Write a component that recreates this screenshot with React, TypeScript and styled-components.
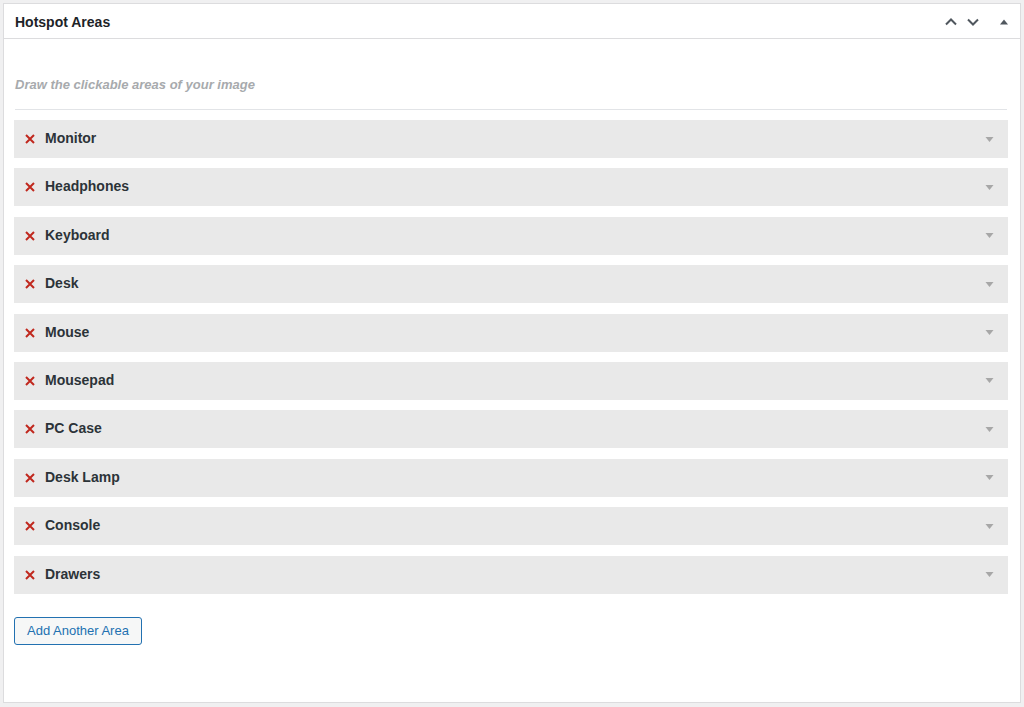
import React from "react";
import styled, { createGlobalStyle } from "styled-components";

const areas: string[] = [
  "Monitor",
  "Headphones",
  "Keyboard",
  "Desk",
  "Mouse",
  "Mousepad",
  "PC Case",
  "Desk Lamp",
  "Console",
  "Drawers",
];

export default function App() {
  return (
    <>
      <GlobalStyle />
      <Page>
        <Panel>
          <Header>
            <Title>Hotspot Areas</Title>
            <HeaderActions>
              <IconButton aria-label="Move up">
                <svg width="14" height="14" viewBox="0 0 14 14">
                  <path d="M2 9.5 L7 4.5 L12 9.5" fill="none" stroke="#50575e" strokeWidth="2" />
                </svg>
              </IconButton>
              <IconButton aria-label="Move down">
                <svg width="14" height="14" viewBox="0 0 14 14">
                  <path d="M2 4.5 L7 9.5 L12 4.5" fill="none" stroke="#50575e" strokeWidth="2" />
                </svg>
              </IconButton>
              <IconButton aria-label="Toggle panel">
                <svg width="10" height="10" viewBox="0 0 10 10">
                  <path d="M1 7.5 L5 2.5 L9 7.5 Z" fill="#50575e" />
                </svg>
              </IconButton>
            </HeaderActions>
          </Header>
          <Body>
            <Hint>Draw the clickable areas of your image</Hint>
            <Divider />
            <List>
              {areas.map((name) => (
                <Row key={name}>
                  <Remove aria-label={"Remove " + name}>
                    <svg width="10" height="10" viewBox="0 0 10 10">
                      <path d="M1 1 L9 9 M9 1 L1 9" stroke="#c0281e" strokeWidth="2" />
                    </svg>
                  </Remove>
                  <Label>{name}</Label>
                  <Caret>
                    <svg width="9" height="7" viewBox="0 0 9 7">
                      <path d="M0.5 1 L8.5 1 L4.5 6 Z" fill="#a7a7a7" />
                    </svg>
                  </Caret>
                </Row>
              ))}
            </List>
            <AddButton type="button">Add Another Area</AddButton>
          </Body>
        </Panel>
      </Page>
    </>
  );
}

const GlobalStyle = createGlobalStyle`
  html, body {
    margin: 0;
    padding: 0;
    background: #f0f0f1;
    font-family: "Liberation Sans", Arial, sans-serif;
  }
`;

const Page = styled.div`
  padding: 3px 3px 0 3px;
  height: 707px;
  box-sizing: border-box;
`;

const Panel = styled.div`
  background: #ffffff;
  border: 1px solid #dcdcde;
  height: 700px;
  box-sizing: border-box;
`;

const Header = styled.div`
  display: flex;
  align-items: center;
  justify-content: space-between;
  height: 35px;
  border-bottom: 1px solid #dcdcde;
  padding: 1px 9px 0 11px;
  box-sizing: border-box;
`;

const Title = styled.h2`
  margin: 0;
  font-size: 14px;
  font-weight: 700;
  color: #1d2327;
`;

const HeaderActions = styled.div`
  display: flex;
  align-items: center;
  gap: 8px;
`;

const IconButton = styled.button`
  border: none;
  background: transparent;
  padding: 0;
  width: 14px;
  height: 14px;
  display: flex;
  align-items: center;
  justify-content: center;
  cursor: pointer;

  &:last-child {
    margin-left: 9px;
  }
`;

const Body = styled.div`
  padding: 0 12px 0 10px;
`;

const Hint = styled.p`
  margin: 0;
  padding-top: 38px;
  height: 16px;
  line-height: 16px;
  font-size: 13px;
  font-style: italic;
  font-weight: 700;
  color: #a7aaad;
  padding-left: 1px;
`;

const Divider = styled.hr`
  border: none;
  border-top: 1px solid #e2e4e7;
  margin: 16px 1px 0 1px;
`;

const List = styled.div`
  display: flex;
  flex-direction: column;
  gap: 10.4px;
  margin-top: 10px;
`;

const Row = styled.div`
  display: flex;
  align-items: center;
  height: 38px;
  background: #e9e9e9;
  padding: 0 14px 0 11px;
`;

const Remove = styled.span`
  display: flex;
  width: 10px;
  height: 10px;
  margin-right: 10px;
`;

const Label = styled.span`
  flex: 1;
  font-size: 14px;
  font-weight: 700;
  color: #2c3338;
  padding-bottom: 2px;
`;

const Caret = styled.span`
  display: flex;
`;

const AddButton = styled.button`
  margin-top: 23px;
  height: 28px;
  padding: 0 12px;
  border: 1px solid #2271b1;
  border-radius: 3px;
  background: #f6f7f7;
  color: #2271b1;
  font-family: "Liberation Sans", Arial, sans-serif;
  font-size: 13px;
  cursor: pointer;
`;
